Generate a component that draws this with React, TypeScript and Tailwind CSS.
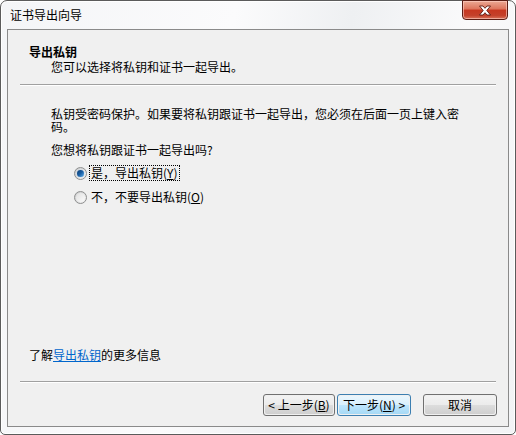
import React from "react";

const font = { fontFamily: '"Noto Sans CJK SC", "Noto Sans", sans-serif' };

function Radio({ checked }: { checked: boolean }) {
  return (
    <span className="relative inline-flex h-[13px] w-[13px] shrink-0 items-center justify-center rounded-full border border-[#8e8f8f] bg-gradient-to-br from-[#c9cacb] to-[#f6f6f6]">
      <span className="h-[9px] w-[9px] rounded-full bg-gradient-to-br from-[#e0e0e0] to-[#fbfbfb] flex items-center justify-center">
        {checked && (
          <span className="h-[7px] w-[7px] rounded-full bg-gradient-to-br from-[#0b3d73] via-[#1a5ea3] to-[#5cb0ec] shadow-[0_0_1px_#2d6fb0]" />
        )}
      </span>
    </span>
  );
}

function Btn({ children, def, w }: { children: React.ReactNode; def?: boolean; w: string }) {
  return (
    <div
      className={`${w} h-[22px] rounded-[3px] border ${
        def ? "border-[#3c7fb1]" : "border-[#707070]"
      } p-[1px]`}
    >
      <div
        className={`flex h-full w-full items-center justify-center rounded-[2px] text-[12px] leading-[14px] text-black ${
          def
            ? "bg-[linear-gradient(to_bottom,#eaf6fd_0%,#d9f0fc_50%,#bee6fd_50%,#a7d9f5_100%)]"
            : "bg-[linear-gradient(to_bottom,#f2f2f2_0%,#ebebeb_50%,#dddddd_50%,#cfcfcf_100%)]"
        }`}
      >
        {children}
      </div>
    </div>
  );
}

export default function App() {
  return (
    <div className="h-[435px] w-[516px] bg-white" style={font}>
      <div className="relative h-[435px] w-[516px] rounded-t-[7px] rounded-b-[5px] border border-[#5b5b5b] bg-[linear-gradient(100deg,#f4f5f7_0%,#fbfbfc_40%,#eef0f2_60%,#fafafb_80%,#f2f3f5_100%)] shadow-[inset_0_0_0_1px_#ffffff]">
        {/* title bar */}
        <div className="flex h-[28px] items-center pl-[9px] text-[12px] leading-[14px] text-black">
          证书导出向导
        </div>
        {/* close button */}
        <div className="absolute right-[7px] top-[-1px] flex h-[20px] w-[46px] items-center justify-center rounded-b-[4px] border border-[#5a1d14] bg-[linear-gradient(to_bottom,#eba994_0%,#dd735b_45%,#c7361f_50%,#c4402a_80%,#d9725a_100%)] shadow-[inset_0_0_0_1px_rgba(255,210,200,0.6)]">
          <svg width="14" height="11" viewBox="0 0 14 11">
            <path
              d="M1.5 1 H5 L7 3.3 L9 1 H12.5 L8.8 5.5 L12.5 10 H9 L7 7.7 L5 10 H1.5 L5.2 5.5 Z"
              fill="#ffffff"
              stroke="#5b1a10"
              strokeWidth="0.9"
              strokeLinejoin="round"
            />
          </svg>
        </div>

        {/* client area */}
        <div className="mx-[6px] flex h-[398px] flex-col border border-[#8a8a8a] bg-[#f0f0f0] text-[12px] text-black">
          {/* header */}
          <div className="pl-[21px] pt-[14px]">
            <div className="font-bold leading-[15px]">导出私钥</div>
            <div className="mt-[1px] pl-[22px] leading-[14px]">您可以选择将私钥和证书一起导出。</div>
          </div>
          <div className="mx-[12px] mt-[10px] h-[2px] border-t border-b border-t-[#a0a0a0] border-b-white" />

          {/* body */}
          <div className="pl-[43px] pt-[21px]">
            <div className="w-[414px] leading-[13px]">
              私钥受密码保护。如果要将私钥跟证书一起导出，您必须在后面一页上键入密码。
            </div>
            <div className="mt-[10px] leading-[14px]">您想将私钥跟证书一起导出吗?</div>
            <div className="mt-[8px] flex flex-col gap-[8px] pl-[23px]">
              <div className="flex h-[16px] items-center gap-[2px]">
                <Radio checked />
                <span className="border border-dotted border-black px-[1px] leading-[14px]">
                  是，导出私钥(<span className="underline">Y</span>)
                </span>
              </div>
              <div className="flex h-[16px] items-center gap-[3px]">
                <Radio checked={false} />
                <span className="px-[1px] leading-[14px]">
                  不，不要导出私钥(<span className="underline">O</span>)
                </span>
              </div>
            </div>
          </div>

          <div className="flex-1" />

          {/* footer */}
          <div className="pl-[21px] leading-[14px]">
            了解<span className="text-[#0066cc] underline">导出私钥</span>的更多信息
          </div>
          <div className="mx-[12px] mt-[19px] h-[2px] border-t border-b border-t-[#a0a0a0] border-b-white" />
          <div className="mb-[10px] mr-[11px] mt-[11px] flex justify-end">
            <Btn w="w-[72px]">
              &lt; 上一步(<span className="underline">B</span>)
            </Btn>
            <div className="w-[2px]" />
            <Btn w="w-[74px]" def>
              下一步(<span className="underline">N</span>) &gt;
            </Btn>
            <div className="w-[12px]" />
            <Btn w="w-[74px]">取消</Btn>
          </div>
        </div>
      </div>
    </div>
  );
}
